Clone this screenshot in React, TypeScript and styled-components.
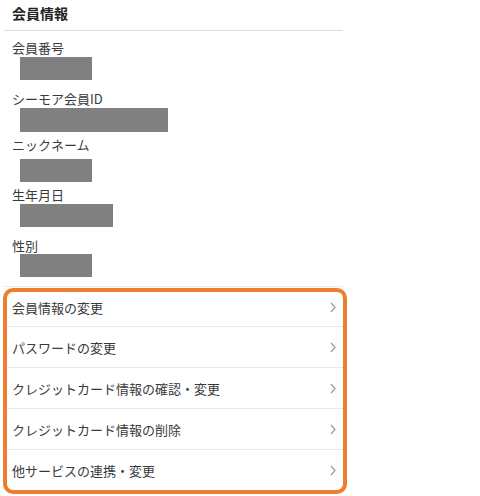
import React from "react";
import styled, { createGlobalStyle } from "styled-components";

const Global = createGlobalStyle`
  html, body { margin: 0; padding: 0; background: #fff; }
  body { font-family: "Noto Sans CJK JP", "Noto Sans", sans-serif; color: #333; }
`;

const Page = styled.div`
  width: 344px;
  margin-left: 3px;
  display: flex;
  flex-direction: column;
`;

const Header = styled.div`
  margin: 0 4px 0 1px;
  padding: 3px 8px 7px;
  border-bottom: 1px solid #dcdcdc;
`;

const Title = styled.h2`
  margin: 0;
  font-size: 14px;
  line-height: 20px;
  font-weight: 700;
  color: #222;
`;

const Info = styled.div`
  margin: 0 4px 0 1px;
  padding: 0 8px 9px;
  border-bottom: 1px solid #ececec;
  display: flex;
  flex-direction: column;
`;

const Field = styled.div<{ $top: number }>`
  margin-top: ${(p) => p.$top}px;
  display: flex;
  flex-direction: column;
  align-items: flex-start;
`;

const Label = styled.div`
  font-size: 13px;
  line-height: 16px;
  color: #3a3a3a;
`;

const Masked = styled.div<{ $w: number; $h: number; $gap: number }>`
  margin: ${(p) => p.$gap}px 0 0 8px;
  width: ${(p) => p.$w}px;
  height: ${(p) => p.$h}px;
  background: #808080;
`;

const Menu = styled.ul`
  list-style: none;
  margin: 1px 0 0;
  padding: 0;
  border: 4px solid #ef7d2f;
  border-radius: 10px;
  overflow: hidden;
`;

const Row = styled.li<{ $h: number; $lift: number }>`
  height: ${(p) => p.$h}px;
  box-sizing: border-box;
  padding: 0 7px ${(p) => p.$lift}px 5px;
  display: flex;
  align-items: center;
  justify-content: space-between;
  border-top: 1px solid #e8e8e8;
  font-size: 13px;
  color: #3a3a3a;
  &:first-child { border-top: none; }
`;

const Chevron = () => (
  <svg width="6" height="11" viewBox="0 0 6 11" fill="none">
    <path d="M1 1l4 4.5L1 10" stroke="#9a9a9a" strokeWidth="1.2" />
  </svg>
);

const fields = [
  { label: "会員番号", top: 9, gap: 1, w: 72, h: 23 },
  { label: "シーモア会員ID", top: 11, gap: 1, w: 148, h: 24 },
  { label: "ニックネーム", top: 5, gap: 6, w: 72, h: 23 },
  { label: "生年月日", top: 5, gap: 1, w: 93, h: 23 },
  { label: "性別", top: 11, gap: 0, w: 72, h: 23 },
];

const items = [
  "会員情報の変更",
  "パスワードの変更",
  "クレジットカード情報の確認・変更",
  "クレジットカード情報の削除",
  "他サービスの連携・変更",
];

export default function App() {
  return (
    <>
      <Global />
      <Page>
        <Header>
          <Title>会員情報</Title>
        </Header>
        <Info>
          {fields.map((f) => (
            <Field key={f.label} $top={f.top}>
              <Label>{f.label}</Label>
              <Masked $w={f.w} $h={f.h} $gap={f.gap} />
            </Field>
          ))}
        </Info>
        <Menu>
          {items.map((t, i) => (
            <Row key={t} $h={i === 0 ? 34 : 41} $lift={i === 0 ? 4 : 0}>
              <span>{t}</span>
              <Chevron />
            </Row>
          ))}
        </Menu>
      </Page>
    </>
  );
}
